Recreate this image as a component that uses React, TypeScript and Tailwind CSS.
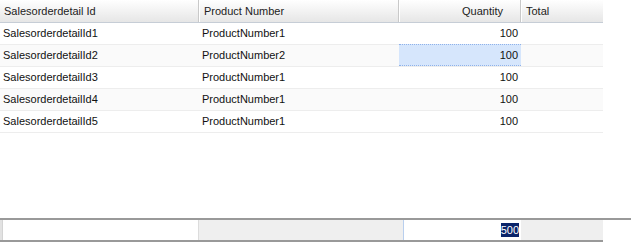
import React from "react";

type Row = { id: string; product: string; qty: number };

const rows: Row[] = [
  { id: "SalesorderdetailId1", product: "ProductNumber1", qty: 100 },
  { id: "SalesorderdetailId2", product: "ProductNumber2", qty: 100 },
  { id: "SalesorderdetailId3", product: "ProductNumber1", qty: 100 },
  { id: "SalesorderdetailId4", product: "ProductNumber1", qty: 100 },
  { id: "SalesorderdetailId5", product: "ProductNumber1", qty: 100 },
];

const cols = "grid grid-cols-[199px_200px_122px_82px] w-[603px]";

export default function App() {
  return (
    <div
      className="w-[631px] h-[242px] bg-white flex flex-col text-[11px] text-[#111] overflow-hidden"
      style={{ fontFamily: '"Liberation Sans", Arial, sans-serif' }}
    >
      {/* column headers */}
      <div className={`${cols} h-[23px] bg-gradient-to-b from-white to-[#e6e6e6] border-b border-[#c6cdd6] text-[#222]`}>
        <div className="flex items-center pl-[4px] border-r border-[#c9c9c9]">Salesorderdetail Id</div>
        <div className="flex items-center pl-[4px] border-l border-white border-r border-r-[#c9c9c9]">Product Number</div>
        <div className="flex items-center justify-end pr-[17px] border-l border-white border-r border-r-[#c9c9c9]">Quantity</div>
        <div className="flex items-center pl-[4px] border-l border-white">Total</div>
      </div>

      {/* data rows */}
      <div className="flex-1 flex flex-col">
        {rows.map((r, i) => {
          const selected = i === 1;
          return (
            <div
              key={r.id}
              className={`${cols} h-[22px] border-b border-[#ededed] ${i % 2 === 1 ? "bg-[#fafafa]" : "bg-white"}`}
            >
              <div className="flex items-center pl-[3px]">{r.id}</div>
              <div className="flex items-center pl-[3px]">{r.product}</div>
              <div
                className={`flex items-center justify-end pr-[3px] ${
                  selected ? "bg-[#d6e6fc] border-y border-dotted border-[#8fb2ea] -mt-[1px]" : ""
                }`}
              >
                {r.qty}
              </div>
              <div />
            </div>
          );
        })}
      </div>

      {/* summary row */}
      <div className="h-[24px] border-t-2 border-[#999] flex">
        <div className={`${cols} h-[22px] border-b-2 border-[#999]`}>
          <div className="flex">
            <div className="w-[3px] bg-[#e2e2e2] border-r border-[#d4d4d4]" />
            <div className="flex-1 bg-white border-r border-[#dcdcdc]" />
          </div>
          <div className="bg-[#efefef] -mr-[4px]" />
          <div className="flex items-center justify-end pr-[2px] bg-white border-x border-[#b9cfee] ml-[4px] -mr-[1px]">
            <span className="bg-[#0a246a] text-white leading-[14px]">500</span>
          </div>
          <div className="bg-[#efefef]" />
        </div>
      </div>
    </div>
  );
}
